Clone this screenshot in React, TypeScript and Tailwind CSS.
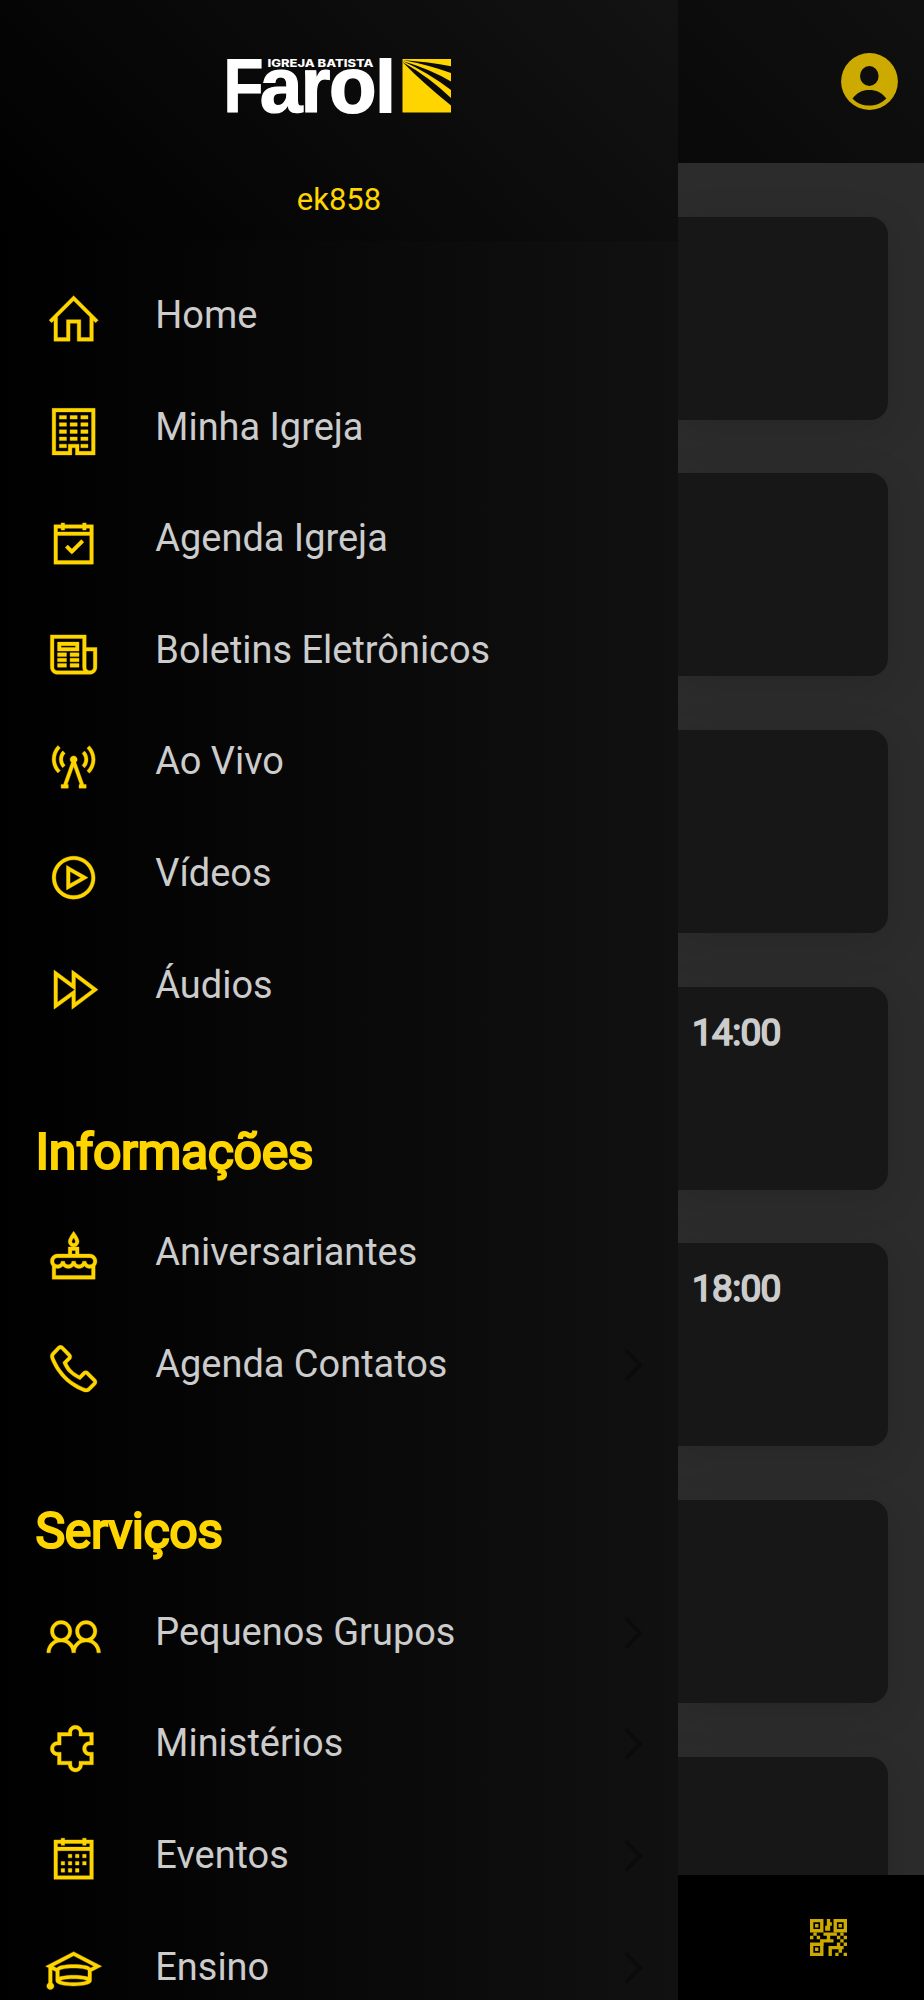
import type { IconType } from 'react-icons';
import {
  LiaBirthdayCakeSolid,
  LiaBroadcastTowerSolid,
  LiaBuilding,
  LiaCalendar,
  LiaCalendarCheck,
  LiaFastForwardSolid,
  LiaGraduationCapSolid,
  LiaHomeSolid,
  LiaNewspaper,
  LiaPhoneSolid,
  LiaPlayCircle,
  LiaPuzzlePieceSolid,
  LiaUserFriendsSolid,
} from 'react-icons/lia';

type MenuItem = { label: string; icon: IconType; arrow?: boolean };

const mainItems: MenuItem[] = [
  { label: 'Home', icon: LiaHomeSolid },
  { label: 'Minha Igreja', icon: LiaBuilding },
  { label: 'Agenda Igreja', icon: LiaCalendarCheck },
  { label: 'Boletins Eletrônicos', icon: LiaNewspaper },
  { label: 'Ao Vivo', icon: LiaBroadcastTowerSolid },
  { label: 'Vídeos', icon: LiaPlayCircle },
  { label: 'Áudios', icon: LiaFastForwardSolid },
];

const infoItems: MenuItem[] = [
  { label: 'Aniversariantes', icon: LiaBirthdayCakeSolid },
  { label: 'Agenda Contatos', icon: LiaPhoneSolid, arrow: true },
];

const serviceItems: MenuItem[] = [
  { label: 'Pequenos Grupos', icon: LiaUserFriendsSolid, arrow: true },
  { label: 'Ministérios', icon: LiaPuzzlePieceSolid, arrow: true },
  { label: 'Eventos', icon: LiaCalendar, arrow: true },
  { label: 'Ensino', icon: LiaGraduationCapSolid, arrow: true },
];

const cards = ['', '', '', '14:00', '18:00', '', ''];

function Logo() {
  return (
    <svg width="226" height="58" viewBox="0 0 226 58" className="overflow-visible">
      <g fill="#fff" stroke="#fff" strokeWidth="1.2" fontWeight="700" className="font-['Liberation_Sans',sans-serif]">
        <text transform="translate(-2.500 54.800) scale(0.86 1)" fontSize="76">
          F
        </text>
        <text y="54.800" fontSize="77">
          <tspan x="33.800">a</tspan>
          <tspan x="74.500">r</tspan>
          <tspan x="103.300" strokeWidth="2">o</tspan>
          <tspan x="149.500" fontSize="72" strokeWidth="1.800">l</tspan>
        </text>
      </g>
      <text
        x="41.500"
        y="10"
        fontSize="10"
        fontWeight="800"
        textLength="106"
        lengthAdjust="spacingAndGlyphs"
        fill="#fff"
        className="font-[Inter,sans-serif]"
      >
        IGREJA BATISTA
      </text>
      <path d="M176.500 2h48.500v53.500h-48.500z" fill="#ffd500" />
      <g fill="#0a0a0a">
        <path d="M176.500 3Q203 5 225 9.200V16Q201 7.500 176.500 3Z" />
        <path d="M176.500 4Q204 12 225 24.500V33Q202 15.500 176.500 4Z" />
        <path d="M176.500 5Q203 20 225 41V48.500Q197 26 176.500 5Z" />
      </g>
    </svg>
  );
}

function MenuRow({ label, icon: Icon, arrow }: MenuItem) {
  return (
    <li className="flex h-[111.67px] items-center pr-[35px] pl-[44.500px]">
      <Icon className="mt-[8px] size-[57.300px] shrink-0 stroke-[0.2px] text-[#ffd500]" />
      <span className="ml-[53.500px] flex-1 text-[37.950px] leading-none text-[#cccccc]">{label}</span>
      {arrow && (
        <svg width="18" height="32" viewBox="0 0 18 32" fill="none" stroke="#0b0b0b" strokeWidth="3.6" strokeLinecap="round">
          <path d="M2 2.500 15 16 2 29.500" />
        </svg>
      )}
    </li>
  );
}

function MenuTitle({ children }: { children: string }) {
  return (
    <h2 className="flex h-[91px] items-center pl-[35.500px] text-[50px] font-normal leading-none tracking-[-0.400px] text-[#ffd500] [-webkit-text-stroke:2.2px_#ffd500]">
      {children}
    </h2>
  );
}

function Drawer() {
  return (
    <aside className="h-full w-[678px] shrink-0 overflow-hidden bg-linear-to-r/srgb from-black to-[#111111]">
      <header className="flex h-[241px] flex-col items-center bg-linear-45/srgb from-black to-[#131313] pt-[57px]">
        <Logo />
        <p className="mt-[68px] text-[31px] leading-[34px] text-[#ffd500]">ek858</p>
      </header>
      <ul className="mt-[19px]">
        {mainItems.map((item) => (
          <MenuRow key={item.label} {...item} />
        ))}
      </ul>
      <div className="mt-[65px]">
        <MenuTitle>Informações</MenuTitle>
        <ul>
          {infoItems.map((item) => (
            <MenuRow key={item.label} {...item} />
          ))}
        </ul>
      </div>
      <div className="mt-[65px]">
        <MenuTitle>Serviços</MenuTitle>
        <ul>
          {serviceItems.map((item) => (
            <MenuRow key={item.label} {...item} />
          ))}
        </ul>
      </div>
    </aside>
  );
}

function AccountIcon() {
  return (
    <svg width="57" height="57" viewBox="0 0 57 57">
      <circle cx="28.500" cy="28.500" r="28.400" fill="#ccaa00" />
      <ellipse cx="28.300" cy="23" rx="9.300" ry="10" fill="#0d0d0d" />
      <path d="M11.500 45.500C16 39.500 21.500 37 28.300 37S41 39.500 45.300 45.500C40 50.500 34.500 52.600 28.300 52.600S16 50.500 11.500 45.500Z" fill="#0d0d0d" />
    </svg>
  );
}

function QrIcon() {
  return (
    <svg width="37" height="37" viewBox="0 0 22 22" fill="#ccaa00">
      <path
        fillRule="evenodd"
        d="M0 0h8v8H0zM2 2v4h4V2zM14 0h8v8h-8zM16 2v4h4V2zM0 14h8v8H0zM2 16v4h4v-4z"
      />
      <path d="M3 3h2v2H3zM17 3h2v2h-2zM3 17h2v2H3z" />
      <path d="M10 0h2v2h1v2h-1v3H9V4h1zM2 8h2v2H2zM0 10h2v2H0zM4 10h2v2H4zM8 8h8v2h-4v2h2v2H8v2H6v-4h4v-2H8zM18 8h2v2h-2zM16 10h2v2h-2zM20 10h2v2h-2zM18 12h2v2h-2zM16 14h2v2h-2zM20 14h2v2h-2zM11 16h9v2h-1v2h-2v-2h-4v4h-2zM15 20h2v2h-2zM20 20h2v2h-2z" />
    </svg>
  );
}

function Backdrop() {
  return (
    <main className="flex h-full min-w-0 flex-1 flex-col bg-[#2c2c2c]">
      <header className="flex h-[163px] shrink-0 justify-end bg-linear-45/srgb from-[#090909] to-[#101010] pt-[53px] pr-[26px]">
        <AccountIcon />
      </header>
      <div className="flex min-h-0 flex-1 flex-col gap-[53.700px] overflow-hidden pt-[53.700px] pr-9">
        {cards.map((time, i) => (
          <div
            key={i}
            className="h-[203px] shrink-0 rounded-r-[18px] bg-[#171717] pt-[27px] pl-[14px] text-[37px] leading-[38px] tracking-[-0.700px] text-[#cccccc] shadow-[0_8px_40px_rgba(0,0,0,0.12)] [-webkit-text-stroke:1.7px_#cccccc]"
          >
            {time}
          </div>
        ))}
      </div>
      <footer className="flex h-[125px] shrink-0 justify-end bg-black pt-[44px] pr-[77px]">
        <QrIcon />
      </footer>
    </main>
  );
}

export default function App() {
  return (
    <div className="flex h-[2000px] w-[924px] overflow-hidden bg-black font-[Roboto,sans-serif]">
      <Drawer />
      <Backdrop />
    </div>
  );
}
